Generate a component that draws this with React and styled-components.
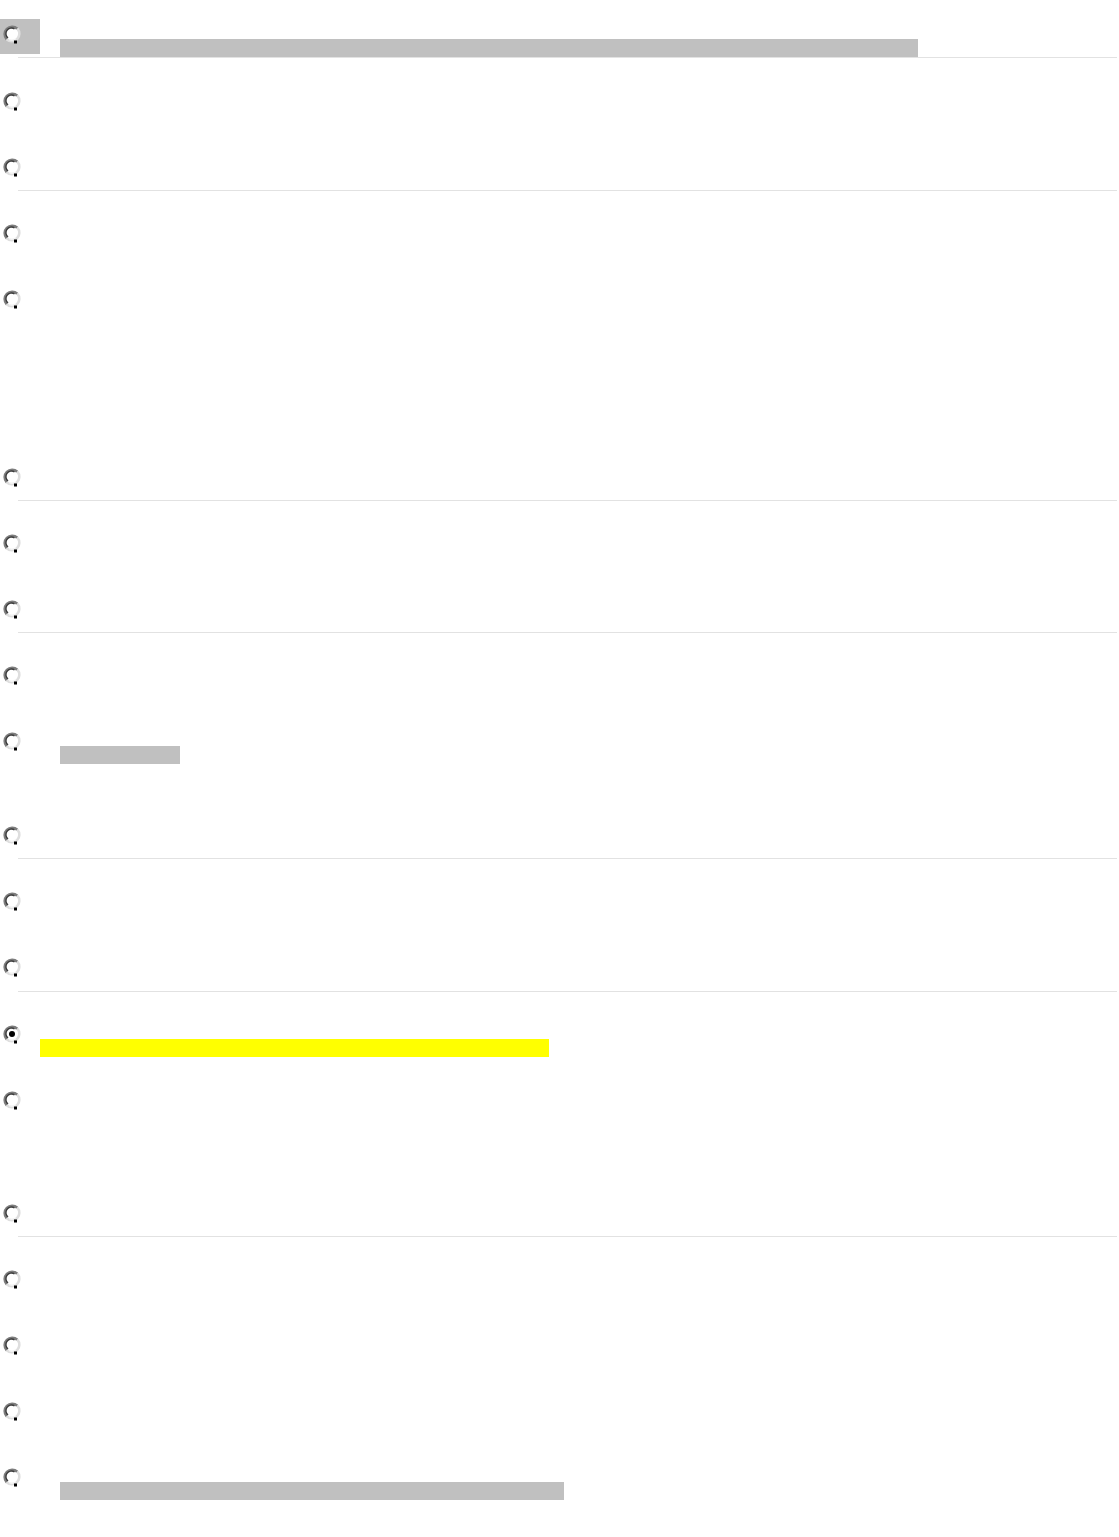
import styled, { createGlobalStyle } from 'styled-components';

const Global = createGlobalStyle`
  html, body {
    margin: 0;
    padding: 0;
    background: #ffffff;
    font-family: "Liberation Sans", Arial, sans-serif;
  }
`;

// each section is one question, rows are its options
const sections = [
    { rows: [{ hl: true, bar: { color: '#c0c0c0', indent: 20, width: 858 } }], after: 33 },
    { rows: [{}, {}] },
    { rows: [{}, { extra: 112 }, {}] },
    { rows: [{}, {}] },
    { rows: [{}, { extra: 28, bar: { color: '#c0c0c0', indent: 20, width: 120 } }, {}] },
    { rows: [{}, { extra: 1 }] },
    { rows: [{ checked: true, bar: { color: '#ffff00', indent: 0, width: 509 } }, { extra: 47 }, {}] },
    { rows: [{}, {}, {}, { bar: { color: '#c0c0c0', indent: 20, width: 504 } }], last: true },
];

const Radio = ({ checked }) => (
    <svg width="20" height="20" viewBox="0 0 20 20">
        <circle cx="10" cy="10" r="7.5" fill="#ffffff" />
        <path d="M4.7 15.3 A7.5 7.5 0 0 1 15.3 4.7" fill="none" stroke="#7c7c7c" strokeWidth="2.6" />
        <path d="M15.3 4.7 A7.5 7.5 0 0 1 4.7 15.3" fill="none" stroke="#dedede" strokeWidth="2.6" />
        <path d="M6 14 A5.6 5.6 0 0 1 12.5 4.9" fill="none" stroke="#3c3c3c" strokeWidth="1.4" />
        <path d="M13.5 15 A5.6 5.6 0 0 1 7 15.3" fill="none" stroke="#f4f4f4" strokeWidth="1.4" />
        <rect x="12" y="16.5" width="3" height="3" fill="#000000" />
        {checked && <circle cx="10" cy="10" r="3" fill="#000000" />}
    </svg>
);

const App = () => {
    return (
        <Page>
            <Global />
            {sections.map((s, i) => (
                <Section key={i} $after={s.after || 32}>
                    <Rows>
                        {s.rows.map((r, j) => (
                            <Row key={j} $extra={r.extra || 0}>
                                <RadioCell $hl={r.hl}>
                                    <Radio checked={r.checked} />
                                </RadioCell>
                                <Label>
                                    {r.bar && <Bar $color={r.bar.color} $indent={r.bar.indent} $width={r.bar.width} />}
                                </Label>
                            </Row>
                        ))}
                    </Rows>
                    {!s.last && <Divider />}
                </Section>
            ))}
        </Page>
    )
}

const Page = styled.div`
width: 1119px;
padding-top: 24px;
padding-bottom: 37px;
display: flex;
flex-direction: column;
`

const Section = styled.div`
display: flex;
flex-direction: column;
margin-bottom: ${p => p.$after}px;
`

const Rows = styled.div`
display: flex;
flex-direction: column;
gap: 33px;
`

const Row = styled.div`
display: grid;
grid-template-columns: 40px 1fr;
align-items: start;
height: ${p => 33 + p.$extra}px;
`

const RadioCell = styled.div`
width: 40px;
height: 35px;
margin-top: -5px;
padding: 5px 0 0 2px;
box-sizing: border-box;
background: ${p => p.$hl ? '#c0c0c0' : 'transparent'};
svg { display: block; }
`

const Label = styled.div`
display: flex;
padding-top: 15px;
`

const Bar = styled.span`
display: block;
height: 18px;
margin-left: ${p => p.$indent}px;
width: ${p => p.$width}px;
background: ${p => p.$color};
`

const Divider = styled.hr`
margin: 0 2px 0 18px;
border: none;
border-top: 1px solid #e2e2e2;
height: 0;
`

export default App;
